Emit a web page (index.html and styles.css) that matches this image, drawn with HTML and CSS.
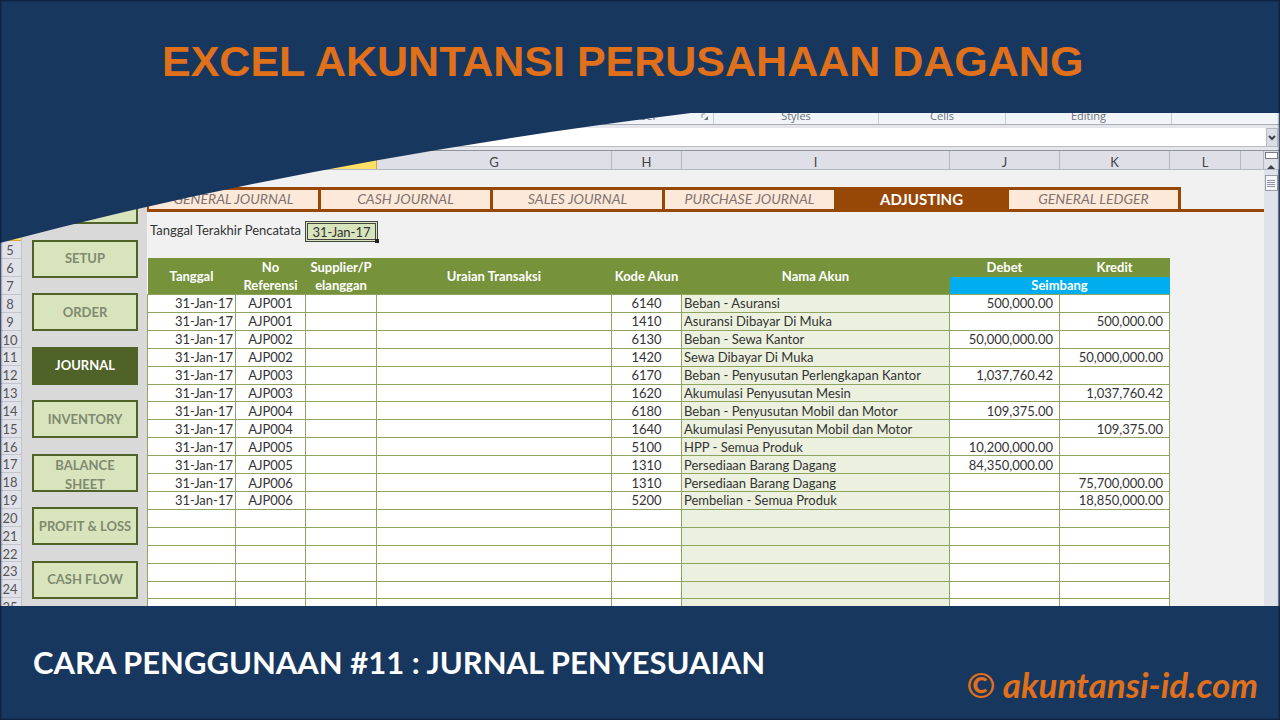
FILE: index.html
```
<!DOCTYPE html>
<html lang="id">
<head>
<meta charset="utf-8">
<title>Excel Akuntansi Perusahaan Dagang</title>
<link rel="stylesheet" href="styles.css">
</head>
<body>
<div class="slide">
  <header class="banner">
    <h1 class="banner-title">EXCEL AKUNTANSI PERUSAHAAN DAGANG</h1>
    <svg class="swoosh" viewBox="0 0 690 131" preserveAspectRatio="none" aria-hidden="true"><path d="M0 0H690V1Q312 48 0 131Z" fill="#18375f"/></svg>
  </header>

  <main class="excel">
    <div class="ribbon">
      <span class="group group-number">Number
        <svg class="launcher" width="8" height="8" viewBox="0 0 8 8" aria-hidden="true"><path d="M1 5V1H4" fill="none" stroke="#8d95a3"/><path d="M7 3V7H3Z" fill="#6d7582"/></svg>
      </span>
      <span class="group">Styles</span>
      <span class="group">Cells</span>
      <span class="group">Editing</span>
      <span class="group"></span>
    </div>
    <div class="formula-bar">
      <input class="formula" type="text" aria-label="Formula">
      <button class="expand" aria-label="Expand formula bar"><svg width="8" height="6" viewBox="0 0 8 6"><path d="M1 1L4 4L7 1" fill="none" stroke="#3d434c" stroke-width="2"/></svg></button>
    </div>
    <div class="columns">
      <span class="col col-active"></span><span class="col">G</span><span class="col">H</span><span class="col">I</span><span class="col">J</span><span class="col">K</span><span class="col">L</span><span class="col"></span>
      <span class="split"><i class="split-box"></i><svg width="10" height="6" viewBox="0 0 10 6" aria-hidden="true"><path d="M1 5L5 1L9 5Z" fill="#3d434c"/></svg></span>
    </div>

    <div class="body">
      <div class="row-numbers">
        <span></span><span></span><span></span><span class="row-active"></span><span>5</span><span>6</span><span>7</span><span>8</span><span>9</span><span>10</span><span>11</span><span>12</span><span>13</span><span>14</span><span>15</span><span>16</span><span>17</span><span>18</span><span>19</span><span>20</span><span>21</span><span>22</span><span>23</span><span>24</span><span>25</span>
      </div>
      <nav class="sidebar">
        <button class="menu" aria-label="Home"></button>
        <button class="menu">SETUP</button>
        <button class="menu">ORDER</button>
        <button class="menu menu-active">JOURNAL</button>
        <button class="menu">INVENTORY</button>
        <button class="menu">BALANCE SHEET</button>
        <button class="menu">PROFIT &amp; LOSS</button>
        <button class="menu">CASH FLOW</button>
      </nav>
      <div class="sheet">
        <nav class="tabs">
          <button class="tab">GENERAL JOURNAL</button>
          <button class="tab">CASH JOURNAL</button>
          <button class="tab">SALES JOURNAL</button>
          <button class="tab">PURCHASE JOURNAL</button>
          <button class="tab tab-active">ADJUSTING</button>
          <button class="tab">GENERAL LEDGER</button>
        </nav>
        <div class="date-row">
          <label class="date-label" for="last-date">Tanggal Terakhir Pencatata</label>
          <span class="selected"><input class="date" id="last-date" type="text" value="31-Jan-17"></span>
        </div>
        <table class="journal">
          <colgroup><col class="w-date"><col class="w-ref"><col class="w-code"><col class="w-desc"><col class="w-ref"><col class="w-name"><col class="w-sum"><col class="w-sum"></colgroup>
          <thead>
            <tr><th rowspan="2">Tanggal</th><th rowspan="2">No<br>Referensi</th><th rowspan="2">Supplier/P<br>elanggan</th><th rowspan="2">Uraian Transaksi</th><th rowspan="2">Kode Akun</th><th rowspan="2">Nama Akun</th><th>Debet</th><th>Kredit</th></tr>
            <tr><th colspan="2" class="balanced">Seimbang</th></tr>
          </thead>
          <tbody>
            <tr><td>31-Jan-17</td><td>AJP001</td><td></td><td></td><td>6140</td><td>Beban - Asuransi</td><td>500,000.00</td><td></td></tr>
            <tr><td>31-Jan-17</td><td>AJP001</td><td></td><td></td><td>1410</td><td>Asuransi Dibayar Di Muka</td><td></td><td>500,000.00</td></tr>
            <tr><td>31-Jan-17</td><td>AJP002</td><td></td><td></td><td>6130</td><td>Beban - Sewa Kantor</td><td>50,000,000.00</td><td></td></tr>
            <tr><td>31-Jan-17</td><td>AJP002</td><td></td><td></td><td>1420</td><td>Sewa Dibayar Di Muka</td><td></td><td>50,000,000.00</td></tr>
            <tr><td>31-Jan-17</td><td>AJP003</td><td></td><td></td><td>6170</td><td>Beban - Penyusutan Perlengkapan Kantor</td><td>1,037,760.42</td><td></td></tr>
            <tr><td>31-Jan-17</td><td>AJP003</td><td></td><td></td><td>1620</td><td>Akumulasi Penyusutan Mesin</td><td></td><td>1,037,760.42</td></tr>
            <tr><td>31-Jan-17</td><td>AJP004</td><td></td><td></td><td>6180</td><td>Beban - Penyusutan Mobil dan Motor</td><td>109,375.00</td><td></td></tr>
            <tr><td>31-Jan-17</td><td>AJP004</td><td></td><td></td><td>1640</td><td>Akumulasi Penyusutan Mobil dan Motor</td><td></td><td>109,375.00</td></tr>
            <tr><td>31-Jan-17</td><td>AJP005</td><td></td><td></td><td>5100</td><td>HPP - Semua Produk</td><td>10,200,000.00</td><td></td></tr>
            <tr><td>31-Jan-17</td><td>AJP005</td><td></td><td></td><td>1310</td><td>Persediaan Barang Dagang</td><td>84,350,000.00</td><td></td></tr>
            <tr><td>31-Jan-17</td><td>AJP006</td><td></td><td></td><td>1310</td><td>Persediaan Barang Dagang</td><td></td><td>75,700,000.00</td></tr>
            <tr><td>31-Jan-17</td><td>AJP006</td><td></td><td></td><td>5200</td><td>Pembelian - Semua Produk</td><td></td><td>18,850,000.00</td></tr>
            <tr><td></td><td></td><td></td><td></td><td></td><td></td><td></td><td></td></tr>
            <tr><td></td><td></td><td></td><td></td><td></td><td></td><td></td><td></td></tr>
            <tr><td></td><td></td><td></td><td></td><td></td><td></td><td></td><td></td></tr>
            <tr><td></td><td></td><td></td><td></td><td></td><td></td><td></td><td></td></tr>
            <tr><td></td><td></td><td></td><td></td><td></td><td></td><td></td><td></td></tr>
            <tr><td></td><td></td><td></td><td></td><td></td><td></td><td></td><td></td></tr>
          </tbody>
        </table>
      </div>
      <div class="scrollbar">
        <span class="thumb"><svg width="8" height="9" viewBox="0 0 8 9" aria-hidden="true"><path d="M0 1.5H8M0 3.5H8M0 5.5H8M0 7.5H8" stroke="#8f96a2"/></svg></span>
      </div>
    </div>
  </main>

  <footer class="footer">
    <h2 class="episode">CARA PENGGUNAAN #11 : JURNAL PENYESUAIAN</h2>
    <p class="site">© akuntansi-id.com</p>
  </footer>
</div>
</body>
</html>
```
FILE: styles.css
```
* { box-sizing: border-box; }
body {
  margin: 0;
  font: 13px/18px Lato, "Open Sans", sans-serif;
  color: #333;
}
button, input { font: inherit; color: inherit; margin: 0; padding: 0; border: 0; border-radius: 0; }

.slide {
  position: relative;
  display: flex;
  flex-direction: column;
  height: 100vh;
  min-width: 1280px;
  background: #18375f;
  overflow: hidden;
}
.slide::after {
  content: "";
  position: absolute;
  z-index: 2;
  inset: 0;
  box-shadow: inset 0 0 2px 1px #0c1c38;
  pointer-events: none;
}

.banner {
  position: relative;
  z-index: 1;
  flex: none;
  height: 113px;
  padding: 36px 0 0 162px;
}
.banner-title {
  margin: 0;
  font: bold 43px/50px "Liberation Sans", Arial, sans-serif;
  color: #e0701a;
  white-space: nowrap;
}
.swoosh {
  position: absolute;
  left: 0;
  top: 112px;
  width: 54%;
  height: 131px;
}

.excel {
  display: flex;
  flex-direction: column;
  flex: 1;
  min-height: 0;
  background: #f1f1f2;
}
.ribbon {
  display: grid;
  grid-template-columns: 714px 165px 127px 166px 1fr;
  flex: none;
  height: 12px;
  background: #f1f4f8;
  border-bottom: 1px solid #a9adb5;
  overflow: hidden;
}
.group {
  border-right: 1px solid #c6cad2;
  font: 11px/6px "Open Sans", sans-serif;
  color: #6a717d;
  text-align: center;
}
.group-number {
  display: flex;
  justify-content: flex-end;
  gap: 44px;
  padding-right: 4px;
}
.formula-bar {
  display: flex;
  flex: none;
  height: 26px;
  padding: 3px 2px 3px 0;
  background: #e4e6eb;
  border-bottom: 1px solid #8f939b;
}
.formula {
  flex: 1;
  background: #fff;
  border-bottom: 1px solid #b9bdc4;
}
.expand {
  width: 12px;
  background: #dadde3;
  border: 1px solid #b5b9c1;
  display: grid;
  place-items: center;
}
.columns {
  display: grid;
  grid-template-columns: 377px 235px 70px 268px 110px 110px 71px 1fr 16px;
  flex: none;
  height: 19px;
  background: #dfe0e7;
  border-bottom: 1px solid #b4b7be;
}
.col {
  height: 18px;
  border-right: 1px solid #b4b7be;
  text-align: center;
  line-height: 22px;
  color: #444;
}
.col-active { background: #ffe066; border-color: #d9a63a; }
.split {
  display: flex;
  flex-direction: column;
  align-items: center;
  gap: 5px;
  padding: 1px 2px 0 0;
}
.split-box { flex: none; width: 13px; height: 7px; background: #fff; border: 1px solid #777b84; }

.body {
  display: flex;
  flex: 1;
  min-height: 0;
  overflow: hidden;
}
.row-numbers {
  display: grid;
  grid-template-rows: repeat(25, 1fr);
  flex: none;
  width: 22px;
  height: 446px;
  background: #e1e2e9;
  border-right: 1px solid #c3c5cc;
  color: #555;
  text-align: center;
}
.row-numbers span { border-bottom: 1px solid #c3c5cc; padding-right: 1px; min-height: 0; }
.row-numbers .row-active { background: #ffe066; border-color: #d9a63a; }

.sidebar {
  display: flex;
  flex-direction: column;
  justify-content: space-between;
  flex: none;
  width: 125px;
  padding: 16px 9px 7px 10px;
  background: #d9d9d9;
}
.menu {
  height: 38px;
  background: #d8e4bc;
  border: 2px solid #4f6228;
  font-weight: bold;
  font-size: 13px;
  line-height: 19px;
  color: #7f8a70;
}
.menu-active { background: #4f6228; color: #fff; }

.sheet { flex: 1; padding-top: 17px; }
.tabs {
  display: flex;
  height: 25px;
  border-bottom: 3px solid #974807;
}
.tab {
  width: 172px;
  padding-bottom: 2px;
  background: #fde9d9;
  border: solid #974807;
  border-width: 3px 3px 0 0;
  font-style: italic;
  font-size: 14px;
  color: #7f7470;
}
.tab:first-child { width: 174px; border-left-width: 2px; }
.tab-active {
  background: #974807;
  color: #fff;
  font-style: normal;
  font-weight: bold;
  font-size: 15px;
}
.date-row { display: flex; padding: 9px 0 16px 3px; }
.date-label {
  width: 155px;
  line-height: 18px;
  white-space: nowrap;
}
.selected {
  position: relative;
  width: 73px;
  height: 21px;
  border: 3px double #444;
  background: #d8e4bc;
}
.selected::after {
  content: "";
  position: absolute;
  right: -4px;
  bottom: -4px;
  width: 4px;
  height: 4px;
  background: #222;
}
.date { display: block; width: 100%; height: 15px; background: none; text-align: center; }

.journal {
  width: 1022px;
  height: 358px;
  table-layout: fixed;
  border-collapse: collapse;
  background: #fff;
}
.w-date { width: 88px; }
.w-ref { width: 70px; }
.w-code { width: 71px; }
.w-desc { width: 235px; }
.w-name { width: 268px; }
.w-sum { width: 110px; }
.journal th {
  height: 17px;
  padding: 0;
  background: #76933c;
  color: #fff;
  line-height: 18px;
}
.journal th.balanced { background: #00aeef; line-height: 16px; }
.journal td {
  height: 17px;
  padding: 0 2px;
  border: 1px solid #8fa55f;
  line-height: 16px;
  white-space: nowrap;
}
.journal td:nth-child(1) { text-align: right; }
.journal td:nth-child(2), .journal td:nth-child(5) { text-align: center; }
.journal td:nth-child(6) { background: #ebf1de; }
.journal td:nth-child(n+7) { text-align: right; padding-right: 6px; }

.scrollbar {
  display: flex;
  flex-direction: column;
  align-items: center;
  flex: none;
  width: 16px;
  padding-top: 5px;
  background: #dfe2ea;
  border-right: 2px solid #8f95a3;
}
.thumb {
  display: grid;
  place-items: center;
  width: 13px;
  height: 16px;
  border: 1px solid #979ca6;
  background: #f4f5f7;
}

.footer {
  display: flex;
  justify-content: space-between;
  flex: none;
  height: 114px;
  padding: 36px 22px 0 33px;
  color: #fff;
}
.episode { margin: 0; font-size: 31px; line-height: 40px; }
.site {
  margin: 0;
  padding-top: 22px;
  font: italic bold 35px/40px Lato, sans-serif;
  color: #e0701a;
}
```
